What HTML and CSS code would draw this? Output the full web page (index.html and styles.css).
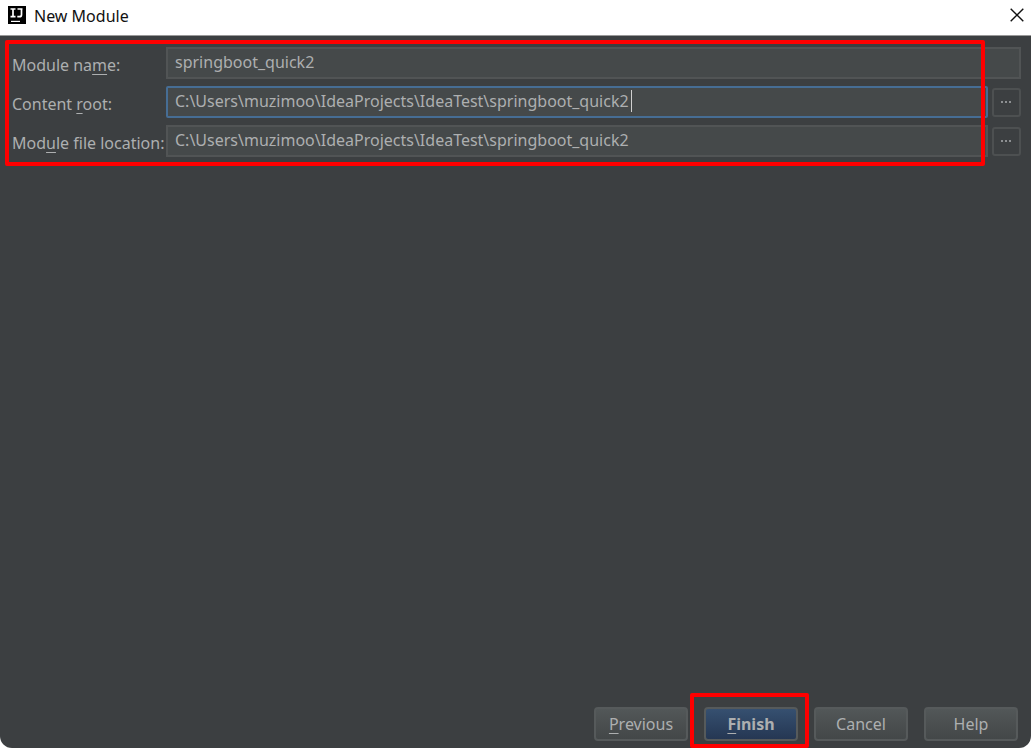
FILE: index.html
```html
<!DOCTYPE html>
<html lang="en">
<head>
<meta charset="utf-8">
<title>New Module</title>
<link rel="stylesheet" href="styles.css">
</head>
<body>
<div class="dialog">
  <header class="titlebar">
    <svg class="logo" viewBox="0 0 18 18" aria-hidden="true">
      <path fill="#000" d="M0 0h18v18H0z"/>
      <path fill="none" stroke="#fff" stroke-width="1.700" d="M2.500 3h5M5 3v7.500M2.500 10.700h5M9.500 3h5M13.500 3v5.700q0 2-2 2h-2.200"/>
      <path fill="#fff" d="M3 14.800h9v1.200H3z"/>
    </svg>
    <h1 class="title">New Module</h1>
    <button class="close" type="button" aria-label="Close">
      <svg viewBox="0 0 14 14"><path fill="none" stroke="#111" stroke-width="1.400" d="M.7.7l12.600 12.600M13.300.7L.7 13.300"/></svg>
    </button>
  </header>
  <form class="body">
    <div class="fields">
      <label class="label" for="name">Module na<u>m</u>e:</label>
      <input class="field field-wide" id="name" type="text" value="springboot_quick2" spellcheck="false">
      <label class="label" for="root">Content <u>r</u>oot:</label>
      <div class="active">
        <input class="field field-focus" id="root" type="text" value="C:\Users\muzimoo\IdeaProjects\IdeaTest\springboot_quick2" spellcheck="false">
        <span class="caret"></span>
      </div>
      <button class="browse" type="button" aria-label="Browse content root"><svg viewBox="0 0 11 2"><path fill="#8d9092" d="M0 0h2v2H0zM4 0h2v2H4zM8 0h2v2H8z"/></svg></button>
      <label class="label" for="location">Mod<u>u</u>le file location:</label>
      <input class="field" id="location" type="text" value="C:\Users\muzimoo\IdeaProjects\IdeaTest\springboot_quick2" spellcheck="false">
      <button class="browse" type="button" aria-label="Browse module file location"><svg viewBox="0 0 11 2"><path fill="#8d9092" d="M0 0h2v2H0zM4 0h2v2H4zM8 0h2v2H8z"/></svg></button>
      <span class="mark mark-fields"></span>
    </div>
    <footer class="actions">
      <button class="button" type="button"><u>P</u>revious</button>
      <div class="primary-wrap">
        <button class="button button-primary" type="button"><u>F</u>inish</button>
        <span class="mark mark-finish"></span>
      </div>
      <button class="button" type="button">Cancel</button>
      <button class="button" type="button">Help</button>
    </footer>
  </form>
</div>
</body>
</html>
```

FILE: styles.css
```css
* {
  box-sizing: border-box;
}

body {
  margin: 0;
  background: #fff;
  font-family: "Noto Sans", "Open Sans", sans-serif;
  font-size: 16px;
  color: #adafb0;
}

button,
input {
  font: inherit;
  color: inherit;
}

u {
  text-underline-offset: 3px;
  text-decoration-thickness: 1px;
}

.dialog {
  display: flex;
  flex-direction: column;
  min-height: 100vh;
  overflow: hidden;
  border-radius: 0 0 12px 12px;
  background: #3c3f41;
}

.titlebar {
  display: flex;
  align-items: center;
  height: 36px;
  padding: 0 7px 5px 8px;
  border-bottom: 1px solid #999;
  background: #fff;
  color: #111;
}

.logo {
  width: 18px;
  height: 18px;
}

.title {
  flex: 1;
  margin: 0 0 0 8px;
  padding-top: 2px;
  font-size: 16px;
  font-weight: 400;
  line-height: 24px;
}

.close {
  display: flex;
  padding: 0;
  border: 0;
  background: none;
}

.close svg {
  width: 14px;
  height: 14px;
}

.body {
  display: flex;
  flex: 1;
  flex-direction: column;
  justify-content: space-between;
  padding: 11px 13px 7px 12px;
}

.fields {
  position: relative;
  display: grid;
  grid-template-columns: 154px 1fr 29px;
  grid-auto-rows: 32px;
  row-gap: 7px;
  align-items: center;
  margin-right: -3px;
}

.label {
  padding-top: 4px;
  line-height: 24px;
  white-space: nowrap;
}

.field {
  width: calc(100% - 4px);
  height: 32px;
  padding: 0 7px 2px;
  border: 2px solid #515455;
  background: #45494a;
  outline: none;
}

.field-wide {
  grid-column: span 2;
  width: 100%;
}

.active {
  position: relative;
}

.field-focus {
  border-color: #466d94;
  border-radius: 2px;
}

.caret {
  position: absolute;
  top: 4px;
  left: 465px;
  width: 1px;
  height: 22px;
  background: #d0d0d0;
}

.browse {
  display: flex;
  align-items: center;
  justify-content: center;
  height: 29px;
  padding: 0;
  border: 2px solid #4d5051;
  border-radius: 3px;
  background: #3c3f41;
}

.browse svg {
  width: 11px;
  height: 2px;
}

.mark {
  position: absolute;
  border: 4px solid #f00;
  border-radius: 2px;
  pointer-events: none;
}

.mark-fields {
  inset: -7px 36px -9px -7px;
}

.mark-finish {
  inset: -14px -11px -7px -14px;
}

.actions {
  display: flex;
  justify-content: flex-end;
  gap: 16px;
}

.primary-wrap {
  position: relative;
}

.button {
  width: 94px;
  height: 34px;
  padding: 0 0 1px;
  border: 2px solid #565a5b;
  border-radius: 4px;
  background: linear-gradient(#525758, #434748);
}

.button-primary {
  background: linear-gradient(#365070, #253753);
  font-weight: 700;
}
```
